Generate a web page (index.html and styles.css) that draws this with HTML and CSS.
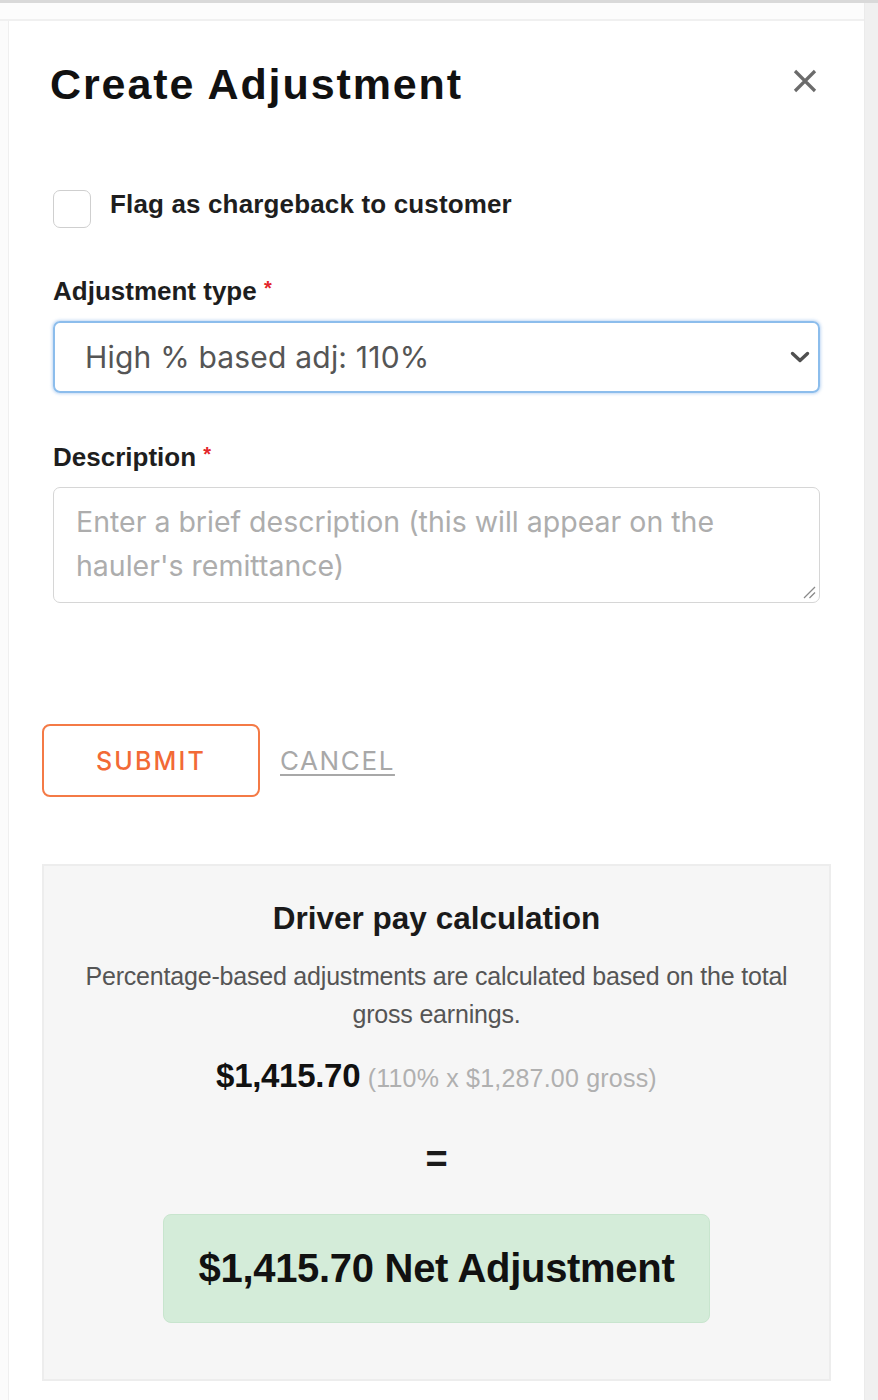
FILE: index.html
```html
<!DOCTYPE html>
<html lang="en">
<head>
<meta charset="utf-8">
<title>Create Adjustment</title>
<link rel="stylesheet" href="styles.css">
</head>
<body>
<div class="topbar"></div>
<div class="frame">
  <div class="maincol">
    <div class="topband"></div>
    <div class="mainrow">
      <div class="gutter"></div>
      <div class="panel">
        <div class="header">
          <h1 class="title">Create Adjustment</h1>
          <svg class="close" width="26" height="26" viewBox="0 0 26 26" aria-label="Close">
            <path d="M3 3 L23 23 M23 3 L3 23" stroke="#6b6b6b" stroke-width="3.2" fill="none"/>
          </svg>
        </div>
        <div class="fields">
          <label class="check-row">
            <span class="checkbox"></span>
            <span class="check-label">Flag as chargeback to customer</span>
          </label>
          <div class="field">
            <div class="label">Adjustment type <span class="req">*</span></div>
            <div class="select">
              <span class="select-value">High % based adj: 110%</span>
              <svg class="chevron" width="20" height="12" viewBox="0 0 20 12">
                <path d="M2.5 2.5 L10 9.5 L17.5 2.5" stroke="#505050" stroke-width="3.4" fill="none" stroke-linecap="round" stroke-linejoin="round"/>
              </svg>
            </div>
          </div>
          <div class="field">
            <div class="label">Description <span class="req">*</span></div>
            <div class="textarea">
              <div class="placeholder">Enter a brief description (this will appear on the<br>hauler's remittance)</div>
              <svg class="grip" width="14" height="14" viewBox="0 0 14 14">
                <path d="M13 2 L2 13 M13 7.5 L7.5 13" stroke="#8a8a8a" stroke-width="1.3" fill="none"/>
              </svg>
            </div>
          </div>
        </div>
        <div class="actions">
          <button class="submit" type="button">SUBMIT</button>
          <a class="cancel" href="#">CANCEL</a>
        </div>
        <div class="calc">
          <div class="calc-title">Driver pay calculation</div>
          <div class="calc-desc">Percentage-based adjustments are calculated based on the total<br>gross earnings.</div>
          <div class="calc-amount"><span class="amount">$1,415.70</span> <span class="formula">(110% x $1,287.00 gross)</span></div>
          <div class="equals">=</div>
          <div class="net">$1,415.70 Net Adjustment</div>
        </div>
      </div>
    </div>
  </div>
  <div class="rightstrip"></div>
</div>
</body>
</html>
```
FILE: styles.css
```css
* { box-sizing: border-box; }
html, body { margin: 0; padding: 0; }
body {
  background: #ffffff;
  font-family: "Liberation Sans", Arial, sans-serif;
  color: #1a1a1a;
  width: 878px;
  height: 1400px;
  overflow: hidden;
}
.topbar { height: 3px; background: #d9d9d9; }
.frame { display: flex; height: 1397px; }
.maincol { flex: 1; display: flex; flex-direction: column; }
.topband { height: 18px; background: #fcfcfc; border-bottom: 2px solid #f0f0f0; }
.mainrow { flex: 1; display: flex; }
.gutter { width: 9px; background: #fbfbfb; border-right: 1px solid #efefef; }
.panel { flex: 1; background: #fff; padding: 38px 33px 0 33px; }
.rightstrip { width: 14px; background: #f0f0f0; border-left: 1px solid #ebebeb; }

.header { display: flex; align-items: center; justify-content: space-between; padding: 0 13px 0 8px; margin-bottom: 79px; }
.title { margin: 0; font-family: "Liberation Sans", Arial, sans-serif; font-weight: 700; font-size: 43px; line-height: 50px; color: #111; letter-spacing: 1.9px; }
.close { margin-bottom: 6px; }

.fields { padding: 0 11px; }
.check-row { display: flex; align-items: flex-start; gap: 19px; }
.checkbox { width: 38px; height: 38px; margin-top: 2px; border: 1.5px solid #cfcfcf; border-radius: 7px; background: #fff; }
.check-label { font-size: 26px; line-height: 32px; font-weight: 700; color: #1e1e1e; letter-spacing: 0.15px; }

.field { margin-top: 47px; }
.field + .field { margin-top: 48px; }
.label { font-size: 26px; line-height: 32px; font-weight: 700; color: #1e1e1e; margin-bottom: 14px; }
.req { color: #e3262b; font-size: 20px; line-height: 0; vertical-align: 5px; }

.select { height: 72px; border: 2px solid #8cbdec; box-shadow: 0 0 3px 1px rgba(120, 170, 230, 0.45); border-radius: 7px; display: flex; align-items: center; justify-content: space-between; padding: 0 8px 0 30px; }
.select-value { font-family: Inter, "Liberation Sans", sans-serif; font-size: 30px; letter-spacing: 0.2px; color: #555; }

.textarea { position: relative; height: 116px; border: 1.5px solid #d6d6d6; border-radius: 7px; padding: 12px 22px; }
.placeholder { font-family: Inter, "Liberation Sans", sans-serif; font-size: 28.5px; line-height: 44px; color: #adadad; }
.grip { position: absolute; right: 3px; bottom: 3px; }

.actions { margin-top: 121px; display: flex; align-items: center; gap: 20px; }
.submit { width: 218px; height: 73px; border: 2px solid #f47a46; border-radius: 8px; background: #fff; color: #f26a36; font-family: Inter, "Liberation Sans", sans-serif; font-weight: 500; font-size: 25px; letter-spacing: 2.2px; padding: 0; }
.cancel { color: #a8a8a8; font-family: Inter, "Liberation Sans", sans-serif; font-size: 26px; letter-spacing: 1.6px; text-decoration: underline; text-underline-offset: 4px; }

.calc { margin-top: 67px; background: #f6f6f6; border: 2px solid #ededed; padding: 34px 0 56px; display: flex; flex-direction: column; align-items: center; text-align: center; }
.calc-title { font-size: 31.5px; line-height: 36px; font-weight: 700; color: #1a1a1a; }
.calc-desc { margin-top: 21px; font-size: 25px; line-height: 38px; color: #555; letter-spacing: -0.2px; }
.calc-amount { margin-top: 23px; line-height: 40px; }
.amount { font-size: 33px; font-weight: 700; color: #111; letter-spacing: -0.3px; }
.formula { margin-left: 3px; font-size: 25px; color: #b0b0b0; letter-spacing: 0.2px; }
.equals { margin-top: 37px; font-size: 38px; line-height: 40px; font-weight: 700; color: #1a1a1a; }
.net { margin-top: 35px; width: 547px; height: 109px; background: #d4ecd9; border: 1px solid #c8e5ce; border-radius: 8px; display: flex; align-items: center; justify-content: center; font-size: 40px; font-weight: 700; color: #111; letter-spacing: -0.3px; }
```
